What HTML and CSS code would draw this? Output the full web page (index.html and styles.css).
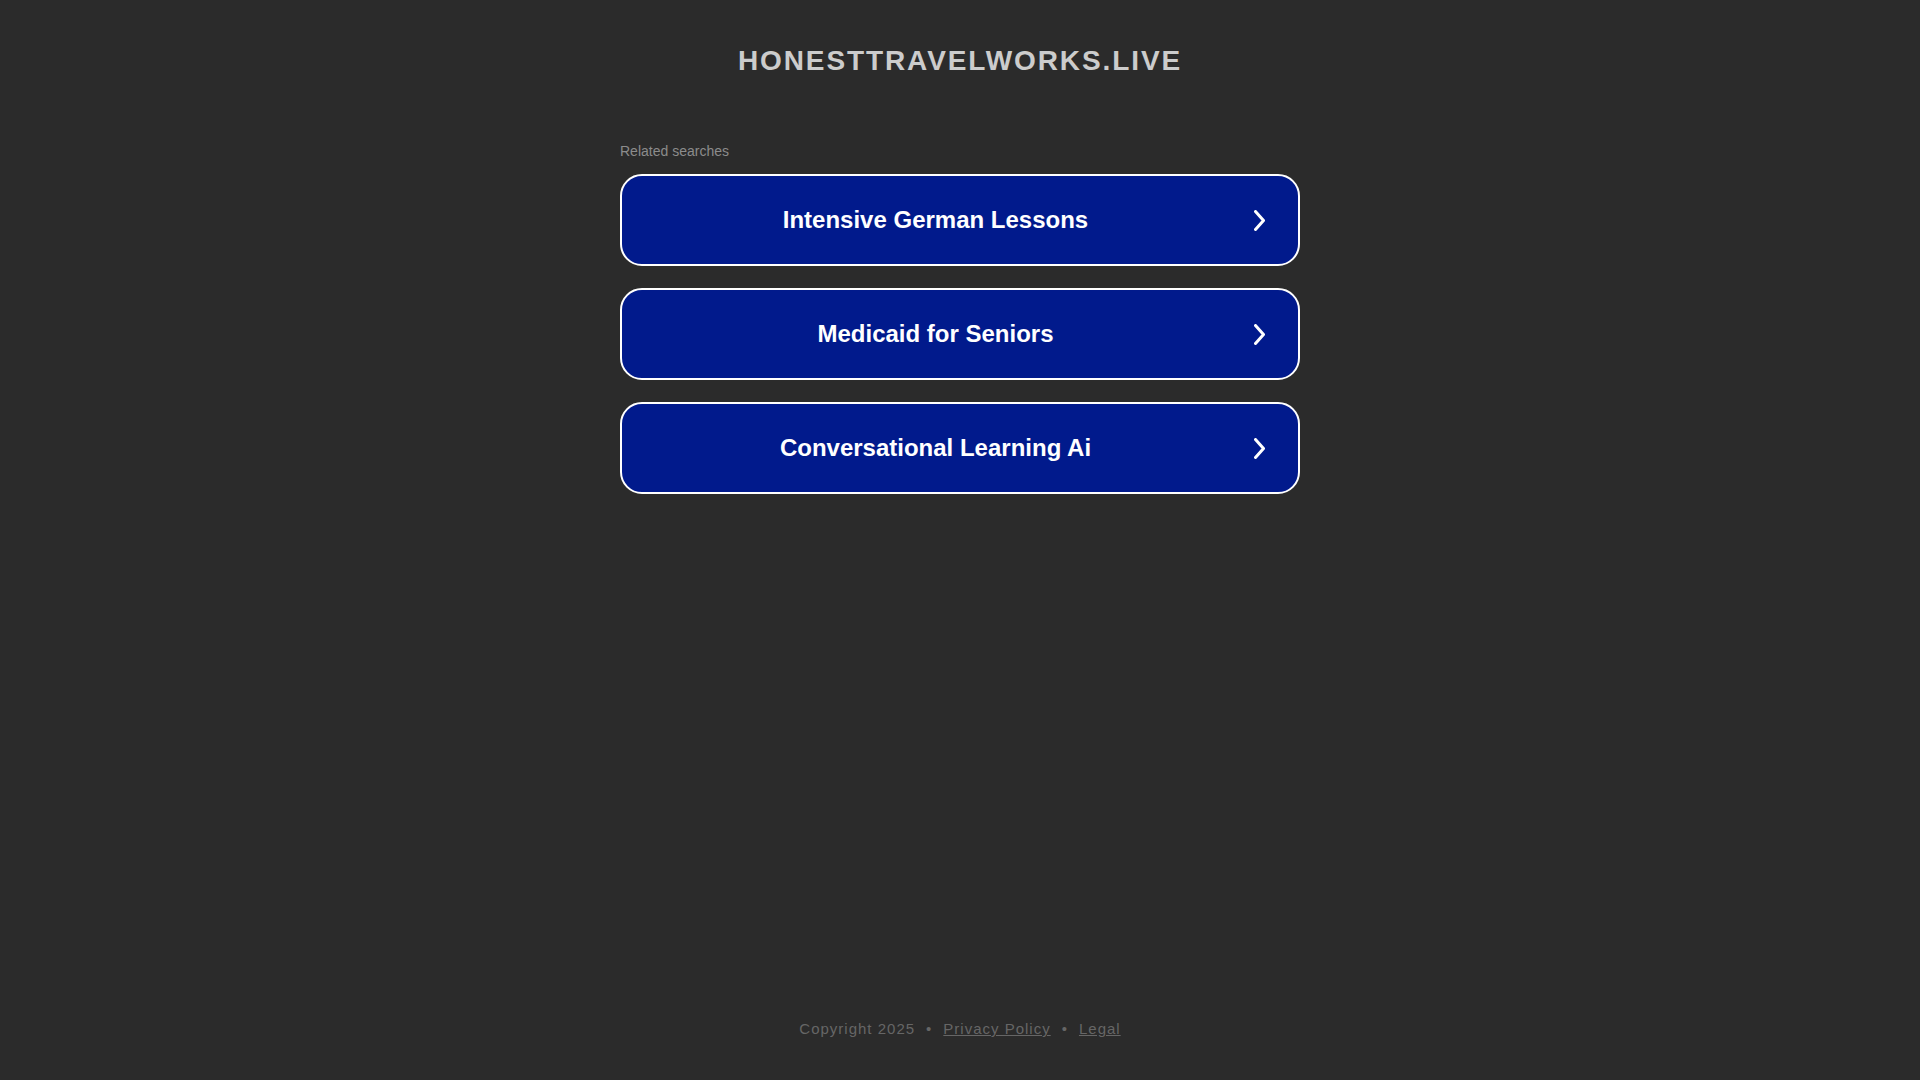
FILE: index.html
```html
<!DOCTYPE html>
<html lang="en">
<head>
<meta charset="utf-8">
<title>honesttravelworks.live</title>
<link rel="stylesheet" href="styles.css">
</head>
<body>
<div class="page">
  <header class="header">
    <h1 class="domain">HONESTTRAVELWORKS.LIVE</h1>
  </header>
  <main class="main">
    <div class="related">
      <p class="related-title">Related searches</p>
      <a class="link" href="#"><span class="link-text">Intensive German Lessons</span><svg class="chev" viewBox="0 0 11 21" width="11" height="21"><path d="M1.5 1.5 L9.5 10.5 L1.5 19.5" fill="none" stroke="#fff" stroke-width="3" stroke-linecap="round" stroke-linejoin="round"/></svg></a>
      <a class="link" href="#"><span class="link-text">Medicaid for Seniors</span><svg class="chev" viewBox="0 0 11 21" width="11" height="21"><path d="M1.5 1.5 L9.5 10.5 L1.5 19.5" fill="none" stroke="#fff" stroke-width="3" stroke-linecap="round" stroke-linejoin="round"/></svg></a>
      <a class="link" href="#"><span class="link-text">Conversational Learning Ai</span><svg class="chev" viewBox="0 0 11 21" width="11" height="21"><path d="M1.5 1.5 L9.5 10.5 L1.5 19.5" fill="none" stroke="#fff" stroke-width="3" stroke-linecap="round" stroke-linejoin="round"/></svg></a>
    </div>
  </main>
  <footer class="footer">
    <span>Copyright 2025</span><span class="dot">•</span><a href="#">Privacy Policy</a><span class="dot">•</span><a href="#">Legal</a>
  </footer>
</div>
</body>
</html>
```

FILE: styles.css
```css
html, body {
  margin: 0;
  padding: 0;
  background: #2b2b2b;
  font-family: "Liberation Sans", Arial, sans-serif;
}
.page {
  min-height: 1080px;
  display: flex;
  flex-direction: column;
  align-items: center;
}
.header {
  padding-top: 41px;
  height: 100px;
  box-sizing: border-box;
}
.domain {
  margin: 0;
  font-size: 28px;
  line-height: 40px;
  font-weight: bold;
  letter-spacing: 1.9px;
  color: #cccccc;
  text-align: center;
}
.main {
  width: 680px;
  flex: 1;
}
.related {
  display: flex;
  flex-direction: column;
  gap: 22px;
}
.related-title {
  margin: 43px 0 -7px;
  font-size: 14px;
  line-height: 16px;
  color: #8c8c8c;
}
.link {
  display: flex;
  align-items: center;
  height: 92px;
  box-sizing: border-box;
  border: 2px solid #ffffff;
  border-radius: 22px;
  background: #011a8c;
  color: #ffffff;
  text-decoration: none;
  padding: 0 33px 0 20px;
}
.link-text {
  flex: 1;
  text-align: center;
  font-size: 24px;
  font-weight: bold;
}
.chev {
  margin-left: 25px;
  flex: none;
}
.footer {
  height: 88px;
  box-sizing: border-box;
  font-size: 15px;
  letter-spacing: 1px;
  color: #666666;
  display: flex;
  align-items: flex-start;
  line-height: 18px;
  padding-top: 28px;
}
.footer a {
  color: #666666;
}
.dot {
  margin: 0 11px;
}
```
